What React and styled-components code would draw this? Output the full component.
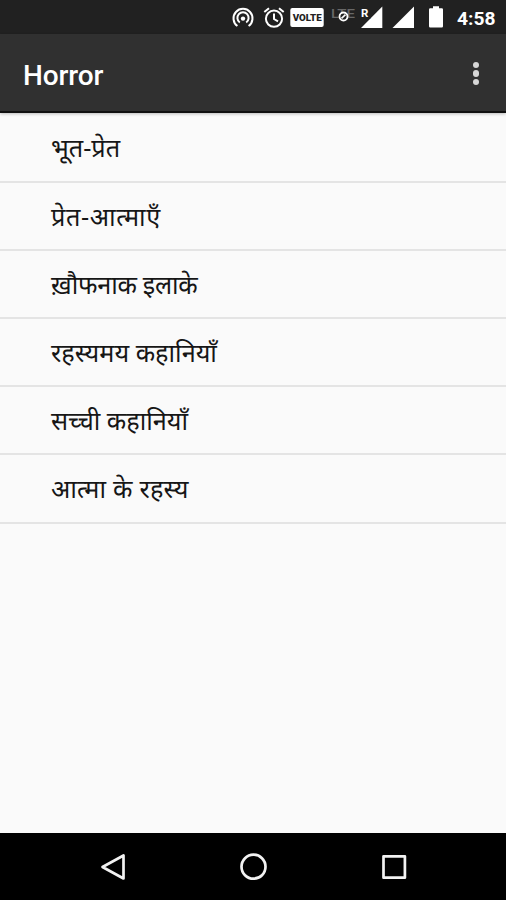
import React from 'react';
import styled, { createGlobalStyle } from 'styled-components';

const GlobalStyle = createGlobalStyle`
  * {
    box-sizing: border-box;
  }
  body {
    margin: 0;
    background: #fafafa;
    font-family: Roboto, 'Noto Sans', 'Noto Sans Devanagari', sans-serif;
  }
`;

const Screen = styled.div`
  display: flex;
  flex-direction: column;
  width: 506px;
  height: 900px;
  overflow: hidden;
  background: #fafafa;
`;

const StatusBar = styled.div`
  display: flex;
  flex: none;
  align-items: center;
  justify-content: flex-end;
  height: 34px;
  padding-right: 11px;
  background: #212121;
`;

const StatusIcon = styled.svg`
  display: block;
  flex: none;
  width: ${({ $width }) => $width}px;
  height: 34px;
  margin-right: ${({ $gap }) => $gap}px;
  font-family: Roboto, sans-serif;
`;

const Clock = styled.span`
  width: 38px;
  padding-top: 3px;
  color: #fff;
  font-size: 19.2px;
  font-weight: 700;
  line-height: 32px;
  white-space: nowrap;
`;

const AppBar = styled.header`
  display: flex;
  flex: none;
  align-items: center;
  justify-content: space-between;
  height: 79px;
  padding: 0 27px 0 23px;
  background: #303030;
  border-bottom: 2px solid #101010;
  box-shadow: 0 1px 3px rgba(0, 0, 0, 0.25);
  z-index: 1;
`;

const Title = styled.h1`
  margin: 0;
  padding-top: 6px;
  color: #fff;
  font-size: 28px;
  font-weight: 500;
  letter-spacing: -0.1px;
  line-height: 32px;
`;

const MenuButton = styled.button`
  display: flex;
  flex-direction: column;
  gap: 2px;
  margin-top: 2px;
  padding: 0;
  border: 0;
  background: none;
`;

const Dot = styled.span`
  width: 6.5px;
  height: 6.5px;
  border-radius: 50%;
  background: #d6d6d6;
`;

const StoryList = styled.ul`
  flex: 1;
  margin: 0;
  padding: 1.4px 0 0;
  list-style: none;
`;

const StoryItem = styled.li`
  display: flex;
  align-items: center;
  height: 68.2px;
  padding: 0 0 0 51px;
  border-bottom: 2px solid #e4e4e4;
  color: #161616;
`;

const StoryLabel = styled.span`
  font-family: 'Noto Sans', 'Noto Sans Devanagari', Roboto, sans-serif;
  font-size: 25.3px;
  letter-spacing: ${({ $tracking }) => $tracking}px;
  line-height: 36px;
  white-space: nowrap;
`;

const NavBar = styled.nav`
  display: flex;
  flex: none;
  align-items: center;
  justify-content: space-between;
  height: 67px;
  padding: 0 98px;
  background: #000;
`;

const NavIcon = styled.svg`
  display: block;
  width: 30px;
  height: 30px;
  fill: none;
  stroke: #f2f2f2;
  stroke-width: 2.7;
  stroke-linejoin: round;
`;

const stories = [
  { title: 'भूत-प्रेत', tracking: 0 },
  { title: 'प्रेत-आत्माएँ', tracking: 0.6 },
  { title: 'ख़ौफनाक इलाके', tracking: -0.3 },
  { title: 'रहस्यमय कहानियाँ', tracking: 0 },
  { title: 'सच्ची कहानियाँ', tracking: 0 },
  { title: 'आत्मा के रहस्य', tracking: 0.2 },
];

const HotspotIcon = () => (
  <StatusIcon $width={22} $gap={9} viewBox="0 0 22 34" fill="none" stroke="#fff" strokeWidth="2">
    <path d="M5.4 26A9.5 9.5 0 1 1 16.6 26" />
    <path d="M7.8 22.5A5.6 5.6 0 1 1 14.2 22.5" />
    <circle cx="11" cy="18.6" r="2.2" fill="#fff" stroke="none" />
  </StatusIcon>
);

const AlarmIcon = () => (
  <StatusIcon $width={22} $gap={5} viewBox="0 0 22 34" fill="none" stroke="#fff" strokeWidth="2">
    <circle cx="11" cy="18.7" r="8.1" />
    <path d="M1.3 12L6 8.2M20.7 12L16 8.2M11 13.5v5.5l4 2.4" />
  </StatusIcon>
);

const VolteIcon = () => (
  <StatusIcon $width={34} $gap={7} viewBox="0 0 34 34">
    <rect x="0.3" y="8" width="33.4" height="19" rx="2" fill="#fff" />
    <text x="2.7" y="21" fontSize="9.8" fontWeight="900" fill="#222" textLength="29" lengthAdjust="spacingAndGlyphs">
      VOLTE
    </text>
  </StatusIcon>
);

const LteIcon = () => (
  <StatusIcon $width={25} $gap={4} viewBox="0 0 25 34">
    <text x="0" y="17.5" fontSize="13" fontWeight="500" fill="#686868" textLength="24" lengthAdjust="spacingAndGlyphs">
      LTE
    </text>
    <circle cx="12.5" cy="16.5" r="4" fill="#212121" stroke="#fff" strokeWidth="1.8" />
    <path d="M10.5 18.3l4-3.6" stroke="#fff" strokeWidth="1.7" />
  </StatusIcon>
);

const RoamingSignalIcon = () => (
  <StatusIcon $width={23} $gap={9} viewBox="0 0 23 34">
    <path d="M1 28L22.3 6.5V28z" fill="#fff" />
    <text x="1" y="17" fontSize="11.5" fontWeight="700" fill="#fff" stroke="#212121" strokeWidth="3" paintOrder="stroke">
      R
    </text>
  </StatusIcon>
);

const SignalIcon = () => (
  <StatusIcon $width={23} $gap={14} viewBox="0 0 23 34">
    <path d="M0.5 28L22 6.5V28z" fill="#fff" />
  </StatusIcon>
);

const BatteryIcon = () => (
  <StatusIcon $width={14} $gap={14} viewBox="0 0 14 34">
    <path d="M1.2 8.2H4V6.2h6v2h2.8q1.2 0 1.2 1.2v16.8q0 1.2-1.2 1.2H1.2Q0 27.4 0 26.2V9.4Q0 8.2 1.2 8.2z" fill="#fff" />
  </StatusIcon>
);

const App = () => {
  return (
    <>
      <GlobalStyle />
      <Screen>
        <StatusBar>
          <HotspotIcon />
          <AlarmIcon />
          <VolteIcon />
          <LteIcon />
          <RoamingSignalIcon />
          <SignalIcon />
          <BatteryIcon />
          <Clock>4:58</Clock>
        </StatusBar>
        <AppBar>
          <Title>Horror</Title>
          <MenuButton aria-label="More options">
            <Dot />
            <Dot />
            <Dot />
          </MenuButton>
        </AppBar>
        <StoryList>
          {stories.map(({ title, tracking }) => (
            <StoryItem key={title}>
              <StoryLabel $tracking={tracking}>{title}</StoryLabel>
            </StoryItem>
          ))}
        </StoryList>
        <NavBar>
          <NavIcon viewBox="0 0 30 30">
            <path d="M4.5 15L25.5 3.5v23z" />
          </NavIcon>
          <NavIcon viewBox="0 0 30 30">
            <circle cx="15.5" cy="14.7" r="12" />
          </NavIcon>
          <NavIcon viewBox="0 0 30 30">
            <rect x="5.5" y="4.3" width="21.4" height="21.4" />
          </NavIcon>
        </NavBar>
      </Screen>
    </>
  );
};

export default App;
